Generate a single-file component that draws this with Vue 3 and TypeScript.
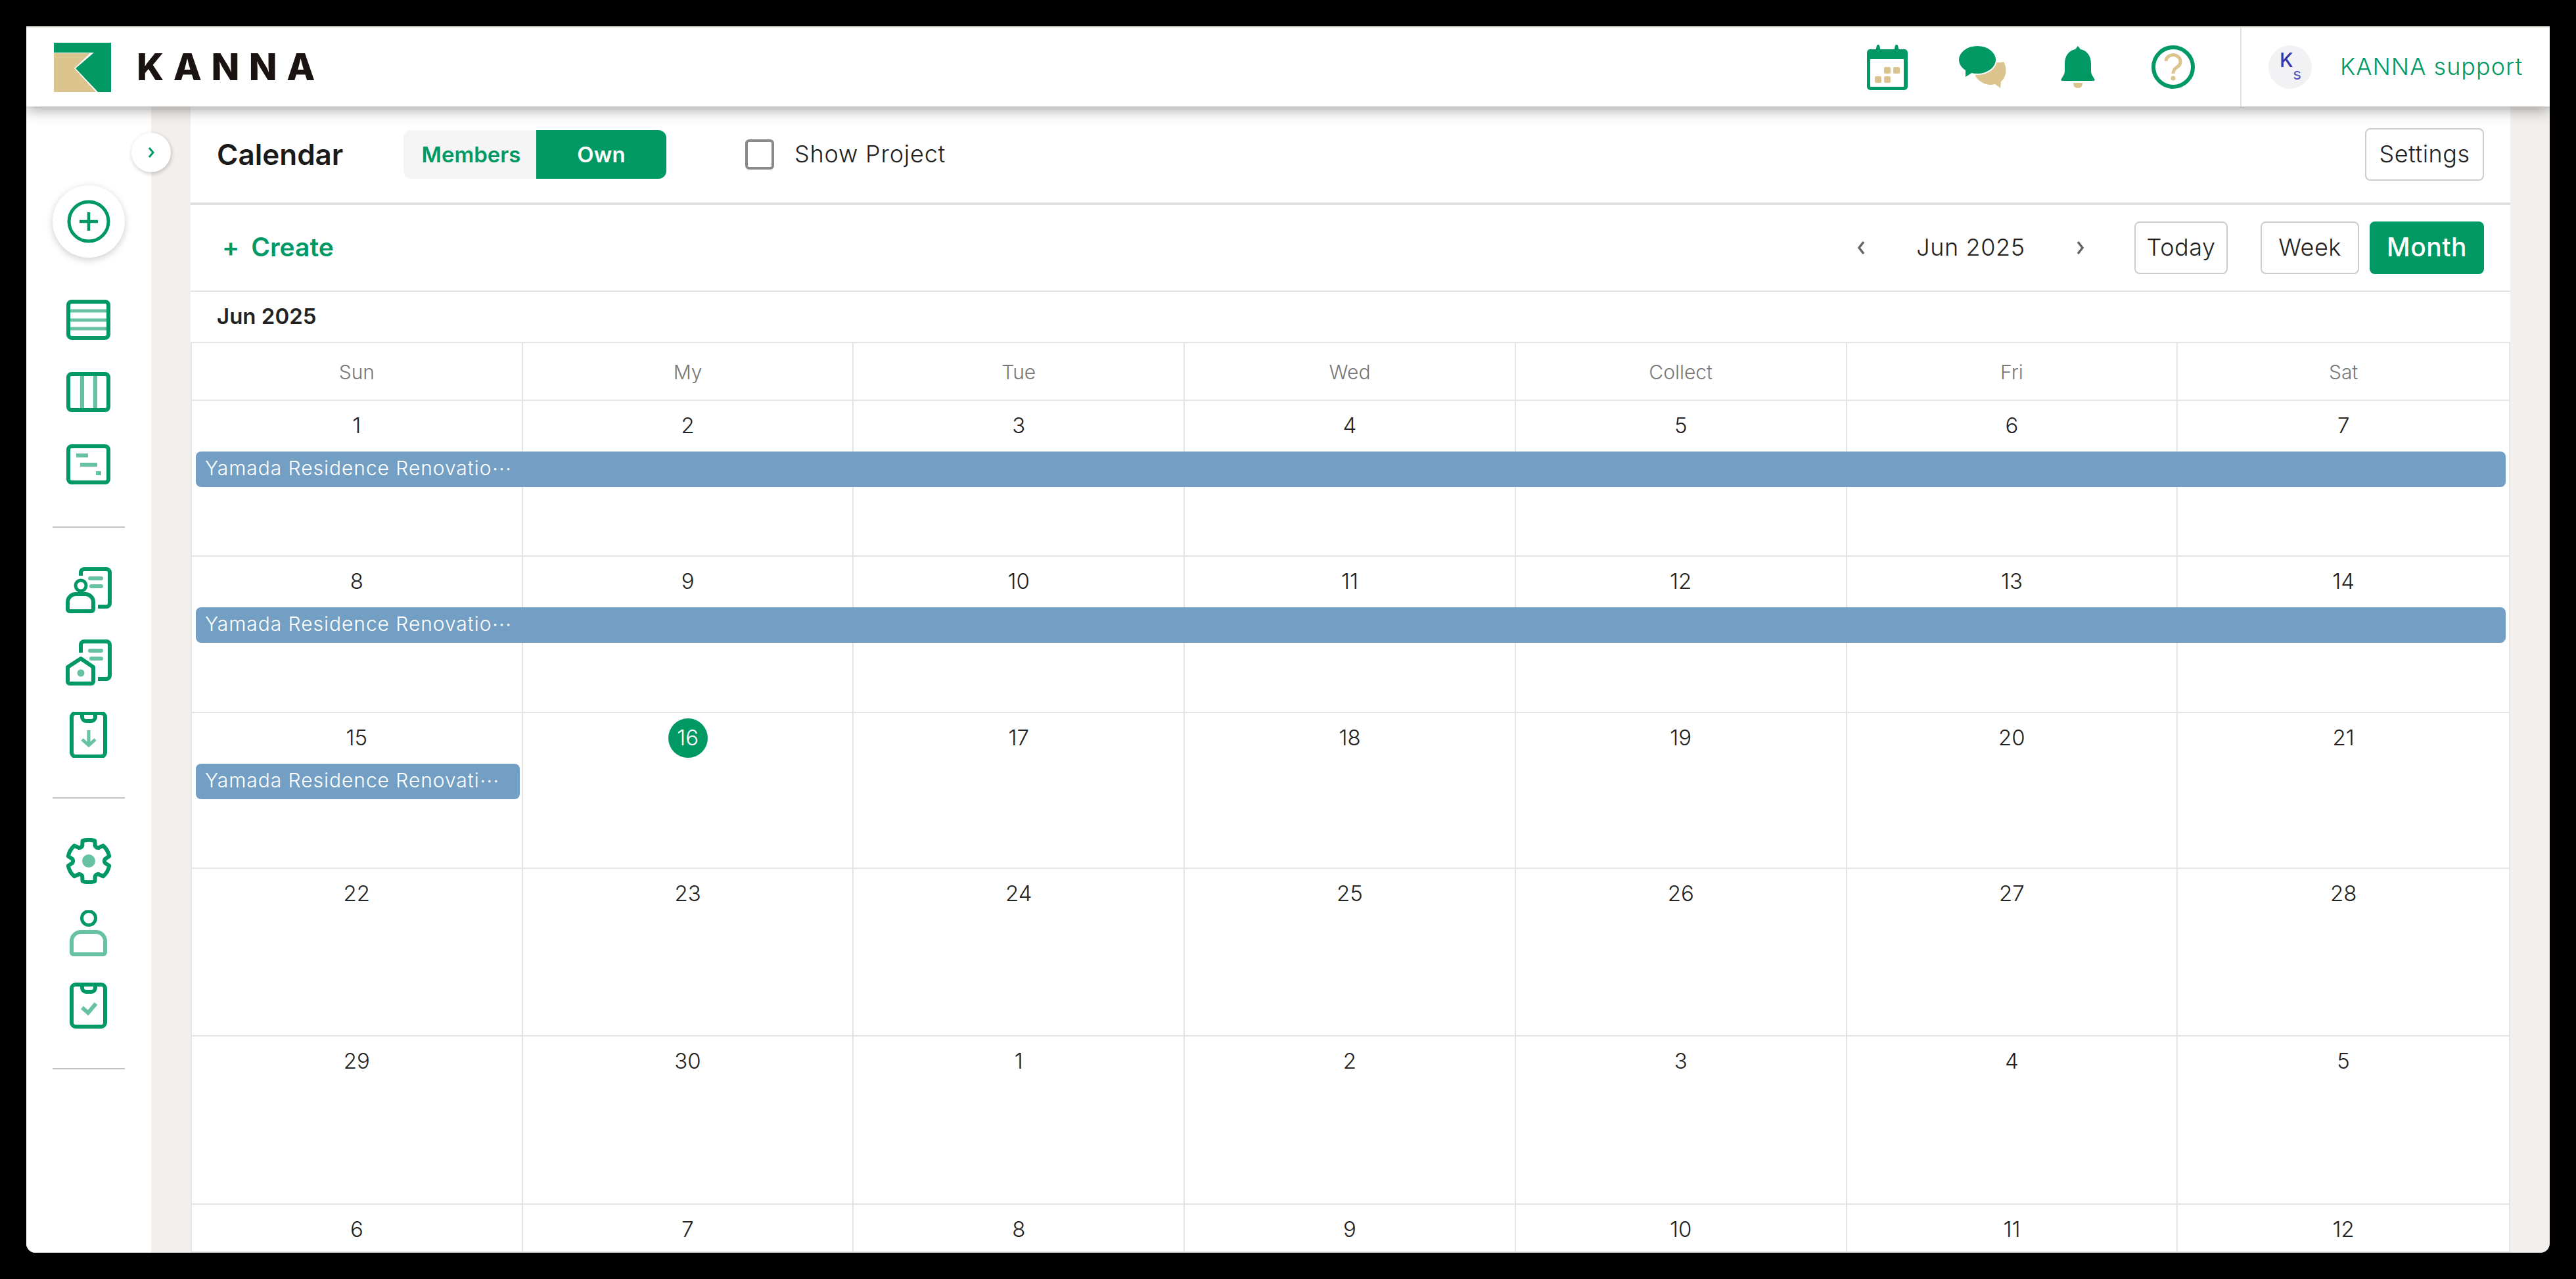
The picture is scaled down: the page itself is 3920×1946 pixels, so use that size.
<script setup lang="ts">
const weekdays = ['Sun', 'My', 'Tue', 'Wed', 'Collect', 'Fri', 'Sat']

interface Week {
  days: number[]
  event?: { label: string; span: number }
}

const weeks: Week[] = [
  { days: [1, 2, 3, 4, 5, 6, 7], event: { label: 'Yamada Residence Renovatio', span: 7 } },
  { days: [8, 9, 10, 11, 12, 13, 14], event: { label: 'Yamada Residence Renovatio', span: 7 } },
  { days: [15, 16, 17, 18, 19, 20, 21], event: { label: 'Yamada Residence Renovati', span: 1 } },
  { days: [22, 23, 24, 25, 26, 27, 28] },
  { days: [29, 30, 1, 2, 3, 4, 5] },
  { days: [6, 7, 8, 9, 10, 11, 12] }
]

function gearPath(): string {
  const pts: string[] = []
  const cx = 35
  const cy = 35
  const pt = (deg: number, r: number) => {
    const a = (deg * Math.PI) / 180
    return `${(cx + r * Math.cos(a)).toFixed(1)} ${(cy + r * Math.sin(a)).toFixed(1)}`
  }
  for (let i = 0; i < 6; i++) {
    const c = -90 + i * 60
    pts.push(`${i === 0 ? 'M' : 'L'}${pt(c - 17, 32)}`)
    pts.push(`Q${pt(c, 34)} ${pt(c + 17, 32)}`)
    pts.push(`L${pt(c + 23, 25)}`)
    pts.push(`Q${pt(c + 30, 23)} ${pt(c + 37, 25)}`)
  }
  return pts.join(' ') + ' Z'
}
const gear = gearPath()
</script>

<template>
  <div class="window">
    <header class="topbar">
      <div class="logo">
        <svg width="87" height="75" viewBox="0 0 87 75">
          <rect width="87" height="75" fill="#009963" />
          <path d="M0 15 H61 L33 39 L67 75 H0 Z" fill="#fff" />
          <path d="M0 16 H55 L31 39 L64 75 H0 Z" fill="#dcc48e" />
        </svg>
        <span class="wordmark">KANNA</span>
      </div>
      <div class="spacer"></div>
      <div class="hicon">
        <svg width="62" height="69" viewBox="0 0 62 69">
          <rect y="7" width="62" height="62" rx="5" fill="#009963" />
          <path d="M13 10 L15 1 Q17 -1 19 1 L21 10 Z M41 10 L43 1 Q45 -1 47 1 L49 10 Z" fill="#009963" />
          <rect x="5" y="22" width="51" height="42" fill="#fff" />
          <rect x="26" y="34" width="10" height="10" rx="2" fill="#dcc48e" />
          <rect x="40" y="34" width="10" height="10" rx="2" fill="#dcc48e" />
          <rect x="12" y="48" width="10" height="10" rx="2" fill="#dcc48e" />
          <rect x="26" y="48" width="10" height="10" rx="2" fill="#dcc48e" />
        </svg>
      </div>
      <div class="hicon">
        <svg width="72" height="64" viewBox="0 0 72 64">
          <path d="M36 25 C50 20 56 28 68 24 C74 34 72 48 64 54 L63 64 L55 58 C40 62 26 52 24 42 Z" fill="#dcc48e" />
          <ellipse cx="28" cy="21" rx="30" ry="23" fill="#fff" />
          <path d="M10 35 L10 47 L21 40 Z" fill="#009963" />
          <ellipse cx="28" cy="21" rx="28" ry="21" fill="#009963" />
        </svg>
      </div>
      <div class="hicon">
        <svg width="52" height="64" viewBox="0 0 52 64">
          <path d="M26 0 L30 5 C40 7 46 15 46 27 V38 C46 43 49 46 51 50 Q53 53 49 53 H3 Q-1 53 1 50 C3 46 6 43 6 38 V27 C6 15 12 7 22 5 Z" fill="#009963" />
          <path d="M19 56 H33 Q33 64 26 64 Q19 64 19 56 Z" fill="#dcc48e" />
        </svg>
      </div>
      <div class="hicon">
        <svg width="66" height="66" viewBox="0 0 66 66" fill="none">
          <circle cx="33" cy="33" r="30" stroke="#009963" stroke-width="6" />
          <path d="M22 24 a11 10 0 1 1 17 9 q-6 4 -6 10" stroke="#dcc48e" stroke-width="5" />
          <circle cx="33" cy="50" r="3.5" fill="#dcc48e" />
        </svg>
      </div>
      <div class="user">
        <div class="avatar"><span class="av-k">K</span><span class="av-s">s</span></div>
        <span class="user-name">KANNA support</span>
      </div>
    </header>

    <div class="body">
      <aside class="sidebar">
        <button class="toggle" type="button">
          <svg width="12" height="20" viewBox="0 0 12 20" fill="none">
            <path d="M3 3 L9 10 L3 17" stroke="#009963" stroke-width="3" />
          </svg>
        </button>
        <div class="add">
          <svg width="66" height="66" viewBox="0 0 66 66" fill="none" stroke="#009963">
            <circle cx="33" cy="33" r="30" stroke-width="5" />
            <path d="M33 19 V47 M19 33 H47" stroke-width="4.5" />
          </svg>
        </div>
        <div class="group first">
          <div class="nav">
            <svg width="70" height="70" viewBox="0 0 70 70" fill="none">
              <path d="M7 22 H62 M7 36 H62 M7 49 H62" stroke="#66c2a2" stroke-width="5" />
              <rect x="4" y="8" width="61" height="55" rx="5" stroke="#009963" stroke-width="6" />
            </svg>
          </div>
          <div class="nav">
            <svg width="70" height="70" viewBox="0 0 70 70" fill="none">
              <path d="M25 8 V63 M45 8 V63" stroke="#66c2a2" stroke-width="6" />
              <rect x="4" y="8" width="61" height="55" rx="5" stroke="#009963" stroke-width="6" />
            </svg>
          </div>
          <div class="nav">
            <svg width="70" height="70" viewBox="0 0 70 70" fill="none">
              <path d="M16 22 H34 M22 36 H48 M46 49 H54" stroke="#66c2a2" stroke-width="6" />
              <rect x="4" y="8" width="61" height="55" rx="5" stroke="#009963" stroke-width="6" />
            </svg>
          </div>
        </div>
        <div class="rule"></div>
        <div class="group">
          <div class="nav">
            <svg width="70" height="70" viewBox="0 0 70 70" fill="none" stroke="#009963" stroke-width="6">
              <path d="M23 13 V8 a5 5 0 0 1 5-5 H62 a5 5 0 0 1 5 5 V55 a5 5 0 0 1 -5 5 H49" />
              <path d="M37 17 H54 M39 29 H54" stroke="#66c2a2" stroke-linecap="round" />
              <circle cx="23" cy="28" r="8" stroke-width="5" />
              <path d="M3 64 V53 a12 12 0 0 1 12-12 H30 a12 12 0 0 1 12 12 V64 a3 3 0 0 1-3 3 H6 a3 3 0 0 1-3-3 Z" />
            </svg>
          </div>
          <div class="nav">
            <svg width="70" height="70" viewBox="0 0 70 70" fill="none" stroke="#009963" stroke-width="6">
              <path d="M23 20 V8 a5 5 0 0 1 5-5 H62 a5 5 0 0 1 5 5 V55 a5 5 0 0 1 -5 5 H49" />
              <path d="M37 17 H54 M39 29 H54" stroke="#66c2a2" stroke-linecap="round" />
              <path d="M3 64 V42 L23 29 L42 42 V64 a3 3 0 0 1-3 3 H6 a3 3 0 0 1-3-3 Z" stroke-linejoin="round" />
              <circle cx="23" cy="51" r="5.5" fill="#66c2a2" stroke="none" />
            </svg>
          </div>
          <div class="nav">
            <svg width="70" height="70" viewBox="0 0 70 70" fill="none" stroke="#009963" stroke-width="6">
              <rect x="9" y="2" width="51" height="66" rx="6" />
              <path d="M25 2 V8 a6 6 0 0 0 6 6 H39 a6 6 0 0 0 6-6 V2" />
              <path d="M35 28 V50 M25 42 L35 51 L45 42" stroke="#66c2a2" stroke-width="5" />
            </svg>
          </div>
        </div>
        <div class="rule"></div>
        <div class="group">
          <div class="nav">
            <svg width="70" height="70" viewBox="0 0 70 70" fill="none">
              <path :d="gear" stroke="#009963" stroke-width="6" stroke-linejoin="round" />
              <circle cx="35" cy="35" r="10" fill="#66c2a2" />
            </svg>
          </div>
          <div class="nav">
            <svg width="70" height="70" viewBox="0 0 70 70" fill="none">
              <circle cx="35" cy="12" r="10.5" stroke="#009963" stroke-width="5" />
              <path d="M9 64 V47 a14 14 0 0 1 14-14 H46 a14 14 0 0 1 14 14 V64 a3 3 0 0 1-3 3 H12 a3 3 0 0 1-3-3 Z" stroke="#66c2a2" stroke-width="6" />
            </svg>
          </div>
          <div class="nav">
            <svg width="70" height="70" viewBox="0 0 70 70" fill="none" stroke="#009963" stroke-width="6">
              <rect x="9" y="3" width="51" height="64" rx="6" />
              <path d="M25 3 V8 a6 6 0 0 0 6 6 H39 a6 6 0 0 0 6-6 V3" />
              <path d="M25 38 L34 46 L46 32" stroke="#66c2a2" stroke-width="6" />
            </svg>
          </div>
        </div>
        <div class="rule"></div>
      </aside>

      <main class="main">
        <section class="bar-title">
          <h1 class="title">Calendar</h1>
          <div class="seg">
            <span class="seg-off">Members</span>
            <span class="seg-on">Own</span>
          </div>
          <span class="check"></span>
          <span class="check-label">Show Project</span>
          <div class="spacer"></div>
          <button class="btn settings" type="button">Settings</button>
        </section>

        <section class="bar-nav">
          <span class="create"><span class="plus">+</span>Create</span>
          <div class="spacer"></div>
          <svg class="chev" width="18" height="28" viewBox="0 0 18 28" fill="none">
            <path d="M13 5 L6 14 L13 23" stroke="#666" stroke-width="3.5" />
          </svg>
          <span class="month-label">Jun 2025</span>
          <svg class="chev" width="18" height="28" viewBox="0 0 18 28" fill="none">
            <path d="M5 5 L12 14 L5 23" stroke="#666" stroke-width="3.5" />
          </svg>
          <button class="btn today" type="button">Today</button>
          <button class="btn week" type="button">Week</button>
          <button class="btn month" type="button">Month</button>
        </section>

        <div class="cal-caption">Jun 2025</div>

        <div class="cal">
          <div class="wk-head">
            <div v-for="d in weekdays" :key="d" class="wk-cell">{{ d }}</div>
          </div>
          <div v-for="(w, i) in weeks" :key="i" class="week-row">
            <div v-for="(d, j) in w.days" :key="j" class="day" :style="{ gridColumn: j + 1 }">
              <span class="num" :class="{ now: i === 2 && j === 1 }">{{ d }}</span>
            </div>
            <div v-if="w.event" class="event" :style="{ gridColumn: '1 / span ' + w.event.span }">
              <span>{{ w.event.label }}</span><span class="dots">…</span>
            </div>
          </div>
        </div>
      </main>
    </div>
  </div>
</template>

<style>
html, body { margin: 0; background: #000; overflow: hidden; }
</style>

<style scoped>
* { box-sizing: border-box; }
.window {
  width: 3840px;
  height: 1866px;
  margin: 40px;
  background: #f2efec;
  border-radius: 0 0 14px 14px;
  overflow: hidden;
  display: flex;
  flex-direction: column;
  font-family: Inter, "Noto Sans CJK JP", sans-serif;
  color: #222;
}
.spacer { flex: 1; }
.topbar {
  height: 122px;
  flex: none;
  display: flex;
  align-items: center;
  background: #fff;
  border-top: 2px solid #e2e6da;
  box-shadow: 0 3px 22px rgba(0, 0, 0, .42);
  position: relative;
  z-index: 3;
}
.logo { display: flex; align-items: center; padding-left: 42px; }
.wordmark {
  margin-left: 39px;
  font-family: Inter, sans-serif;
  font-size: 56px;
  font-weight: 800;
  letter-spacing: 14.5px;
  color: #1a1311;
}
.hicon { width: 145px; display: flex; justify-content: center; }
.user {
  width: 471px;
  height: 100%;
  margin-left: 30px;
  border-left: 2px solid #e2e2e2;
  display: flex;
  align-items: center;
  padding-left: 41px;
}
.avatar {
  width: 66px;
  height: 66px;
  border-radius: 50%;
  background: #f2f2f5;
  display: flex;
  flex-direction: column;
  color: #3636a8;
  line-height: 1;
}
.av-k { font-size: 30px; font-weight: 500; align-self: flex-start; margin: 7px 0 0 17px; }
.av-s { font-size: 24px; align-self: flex-end; margin: -5px 16px 0 0; color: #5555bb; }
.user-name { margin-left: 43px; font-size: 36px; font-weight: 300; letter-spacing: 1px; color: #009963; padding-bottom: 3px; }

.body { flex: 1; display: flex; min-height: 0; }
.sidebar {
  width: 190px;
  flex: none;
  background: #fff;
  display: flex;
  flex-direction: column;
  align-items: center;
  padding-top: 120px;
  position: relative;
}
.toggle {
  position: absolute;
  left: 160px;
  top: 40px;
  width: 60px;
  height: 60px;
  border: 0;
  border-radius: 50%;
  background: #fff;
  box-shadow: 1px 2px 6px rgba(0, 0, 0, .22);
  display: flex;
  align-items: center;
  justify-content: center;
  padding: 0;
  z-index: 2;
}
.add {
  width: 110px;
  height: 110px;
  border-radius: 50%;
  background: #fff;
  box-shadow: 0 3px 12px rgba(0, 0, 0, .2);
  display: flex;
  align-items: center;
  justify-content: center;
  flex: none;
  margin-bottom: 39px;
}
.group { display: flex; flex-direction: column; }
.nav { width: 110px; height: 110px; display: flex; align-items: center; justify-content: center; }
.rule { width: 110px; height: 2px; background: #c4c4c4; margin: 40px 0; flex: none; }

.main {
  width: 3530px;
  margin-left: 60px;
  background: #fff;
  flex: none;
  display: flex;
  flex-direction: column;
  min-height: 0;
  overflow: hidden;
}
.bar-title {
  height: 150px;
  flex: none;
  display: flex;
  align-items: center;
  padding: 0 40px;
  border-bottom: 4px solid #e0e0e0;
}
.title { margin: 0; width: 284px; font-size: 44px; font-weight: 600; color: #1a1a1a; }
.seg { width: 400px; height: 74px; display: flex; font-size: 33px; font-weight: 600; }
.seg-off, .seg-on { flex: 1; display: flex; align-items: center; justify-content: center; }
.seg-off { background: #f5f5f5; color: #009963; border-radius: 12px 0 0 12px; padding-left: 4px; }
.seg-on { background: #009963; color: #fff; border-radius: 0 12px 12px 0; }
.check {
  width: 44px;
  height: 46px;
  margin-left: 120px;
  border: 4px solid #8a8a8a;
  border-radius: 6px;
}
.check-label { margin-left: 31px; font-size: 36px; font-weight: 300; letter-spacing: .8px; color: #222; padding-bottom: 3px; }
.btn {
  height: 80px;
  border: 2px solid #ccc;
  border-radius: 8px;
  background: #fff;
  font: inherit;
  font-size: 36px;
  font-weight: 300;
  letter-spacing: .5px;
  color: #222;
  padding: 0 0 3px;
}
.settings { width: 181px; }
.bar-nav {
  height: 132px;
  flex: none;
  display: flex;
  align-items: center;
  padding: 0 40px 0 48px;
  border-bottom: 2px solid #e4e4e4;
}
.create { display: flex; align-items: center; font-size: 39px; font-weight: 600; color: #009963; padding-bottom: 3px; }
.plus { margin-right: 18px; }
.month-label { width: 316px; text-align: center; font-size: 36px; font-weight: 300; letter-spacing: .6px; color: #222; padding-bottom: 3px; }
.today { width: 142px; margin-left: 73px; }
.week { width: 150px; margin-left: 50px; }
.month { width: 174px; margin-left: 16px; background: #009963; border-color: #009963; color: #fff; font-size: 39px; font-weight: 500; }
.cal-caption {
  height: 76px;
  flex: none;
  display: flex;
  align-items: center;
  padding-left: 40px;
  font-size: 33px;
  font-weight: 600;
  color: #222;
  padding-bottom: 3px;
}
.cal {
  flex: 1;
  min-height: 0;
  display: grid;
  grid-template-rows: 88px 237px 238px 237px 255px 256px 1fr;
  border-top: 2px solid #e4e4e4;
  border-left: 2px solid #e4e4e4;
  border-right: 2px solid #e4e4e4;
}
.wk-head, .week-row { display: grid; grid-template-columns: repeat(7, 1fr); border-bottom: 2px solid #e4e4e4; min-height: 0; }
.wk-cell {
  display: flex;
  align-items: center;
  justify-content: center;
  font-size: 30px;
  font-weight: 300;
  color: #777;
  border-right: 2px solid #e4e4e4;
  padding-top: 2px;
}
.wk-cell:last-child { border-right: 0; }
.week-row { grid-template-rows: 77px 54px 1fr; }
.day {
  grid-row: 1 / 4;
  display: flex;
  justify-content: center;
  align-items: flex-start;
  padding-top: 8px;
  border-right: 2px solid #e4e4e4;
}
.day:nth-child(7) { border-right: 0; }
.num {
  width: 60px;
  height: 60px;
  display: flex;
  align-items: center;
  justify-content: center;
  border-radius: 50%;
  font-size: 33px;
  font-weight: 300;
  color: #222;
  padding-bottom: 3px;
}
.num.now { background: #009963; color: #fff; }
.event {
  grid-row: 2;
  margin: 0 5px 0 6px;
  background: #749fc4;
  border-radius: 8px;
  color: #fff;
  font-size: 30px;
  font-weight: 300;
  letter-spacing: .95px;
  padding: 0 0 4px 14px;
  display: flex;
  align-items: center;
  white-space: nowrap;
  overflow: hidden;
  z-index: 1;
}
.dots { font-family: "Noto Sans CJK JP", sans-serif; letter-spacing: 0; }
</style>
